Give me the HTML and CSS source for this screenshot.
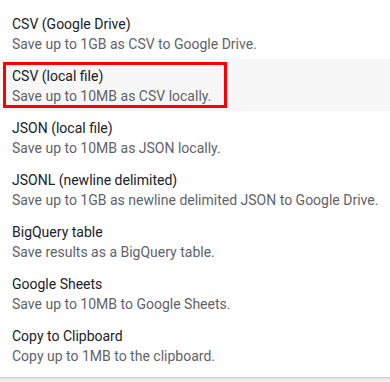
FILE: index.html
```html
<!DOCTYPE html>
<html>
<head>
<meta charset="utf-8">
<link rel="stylesheet" href="styles.css">
</head>
<body>
<div class="menu">
  <div class="item">
    <div class="title">CSV (Google Drive)</div>
    <div class="desc">Save up to 1GB as CSV to Google Drive.</div>
  </div>
  <div class="item active">
    <div class="title">CSV (local file)</div>
    <div class="desc">Save up to 10MB as CSV locally.</div>
    <div class="highlight"></div>
  </div>
  <div class="item">
    <div class="title">JSON (local file)</div>
    <div class="desc">Save up to 10MB as JSON locally.</div>
  </div>
  <div class="item">
    <div class="title">JSONL (newline delimited)</div>
    <div class="desc">Save up to 1GB as newline delimited JSON to Google Drive.</div>
  </div>
  <div class="item">
    <div class="title">BigQuery table</div>
    <div class="desc">Save results as a BigQuery table.</div>
  </div>
  <div class="item">
    <div class="title">Google Sheets</div>
    <div class="desc">Save up to 10MB to Google Sheets.</div>
  </div>
  <div class="item">
    <div class="title">Copy to Clipboard</div>
    <div class="desc">Copy up to 1MB to the clipboard.</div>
  </div>
</div>
<div class="edge"></div>
</body>
</html>
```
FILE: styles.css
```css
html, body {
  margin: 0;
  padding: 0;
  background: #ffffff;
}
body {
  width: 390px;
  height: 382px;
  overflow: hidden;
  font-family: Roboto, "Liberation Sans", Arial, sans-serif;
}
.menu {
  height: 371px;
  padding-top: 7px;
  box-sizing: border-box;
  border-bottom: 1px solid #ffffff;
}
.item {
  position: relative;
  height: 52px;
  box-sizing: border-box;
  padding: 7px 12px 5px 12px;
  font-size: 14px;
  line-height: 20px;
  white-space: nowrap;
}
.item.active {
  background: #f6f7f6;
}
.title {
  color: #202124;
}
.desc {
  color: #5f6368;
}
.highlight {
  position: absolute;
  left: 3px;
  top: 3px;
  width: 224px;
  height: 46px;
  box-sizing: border-box;
  border: 3px solid #ff0000;
}
.edge {
  margin-top: 6px;
  height: 4px;
  border-top: 1px solid #cfcfcf;
  background: linear-gradient(#e2e2e2, #f3f3f3);
}
```
